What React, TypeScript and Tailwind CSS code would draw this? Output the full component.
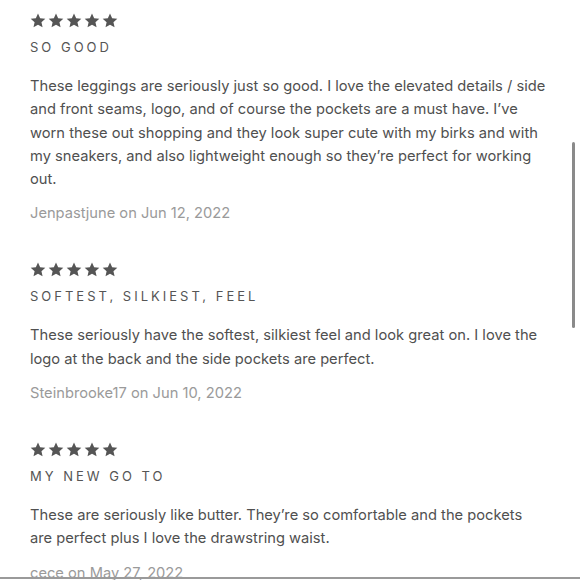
import React from "react";

const reviews = [
  {
    title: "SO GOOD",
    body: [
      "These leggings are seriously just so good. I love the elevated details / side",
      "and front seams, logo, and of course the pockets are a must have. I\u2019ve",
      "worn these out shopping and they look super cute with my birks and with",
      "my sneakers, and also lightweight enough so they\u2019re perfect for working",
      "out.",
    ],
    author: "Jenpastjune on Jun 12, 2022",
  },
  {
    title: "SOFTEST, SILKIEST, FEEL",
    body: [
      "These seriously have the softest, silkiest feel and look great on. I love the",
      "logo at the back and the side pockets are perfect.",
    ],
    author: "Steinbrooke17 on Jun 10, 2022",
  },
  {
    title: "MY NEW GO TO",
    body: [
      "These are seriously like butter. They\u2019re so comfortable and the pockets",
      "are perfect plus I love the drawstring waist.",
    ],
    author: "cece on May 27, 2022",
  },
];

function Star() {
  return (
    <svg width="16" height="15" viewBox="0 0 24 23" fill="#555555">
      <path d="M12 0.8l3.3 7.2 7.9 0.8-5.9 5.3 1.7 7.8L12 17.9l-6.9 4 1.7-7.8L0.8 8.8l7.9-0.8z" />
    </svg>
  );
}

export default function App() {
  return (
    <div
      className="relative w-[580px] h-[580px] overflow-hidden bg-white"
      style={{ fontFamily: "Inter, 'Noto Sans', sans-serif" }}
    >
      <div className="pl-[30px] pr-[24px] pt-[13px] flex flex-col gap-[37px]">
        {reviews.map((r) => (
          <div key={r.title} className="flex flex-col">
            <div className="flex gap-[2px] h-[15px]">
              <Star />
              <Star />
              <Star />
              <Star />
              <Star />
            </div>
            <div className="mt-[9px] text-[13px] leading-[20px] tracking-[3px] text-[#555]">
              {r.title}
            </div>
            <p className="mt-[18px] text-[14.7px] leading-[23.3px] text-[#505050]">
              {r.body.map((line, i) => (
                <span key={i} className="block whitespace-nowrap">
                  {line}
                </span>
              ))}
            </p>
            <div className="mt-[10px] text-[14.7px] leading-[24px] text-[#9a9a9a]">
              {r.author}
            </div>
          </div>
        ))}
      </div>
      <div className="absolute left-[572px] top-[142px] w-[3px] h-[186px] rounded-full bg-[#8a8a8a]" />
      <div className="absolute left-0 right-0 top-[577px] h-[2px] bg-[#9a9a9a]" />
    </div>
  );
}
